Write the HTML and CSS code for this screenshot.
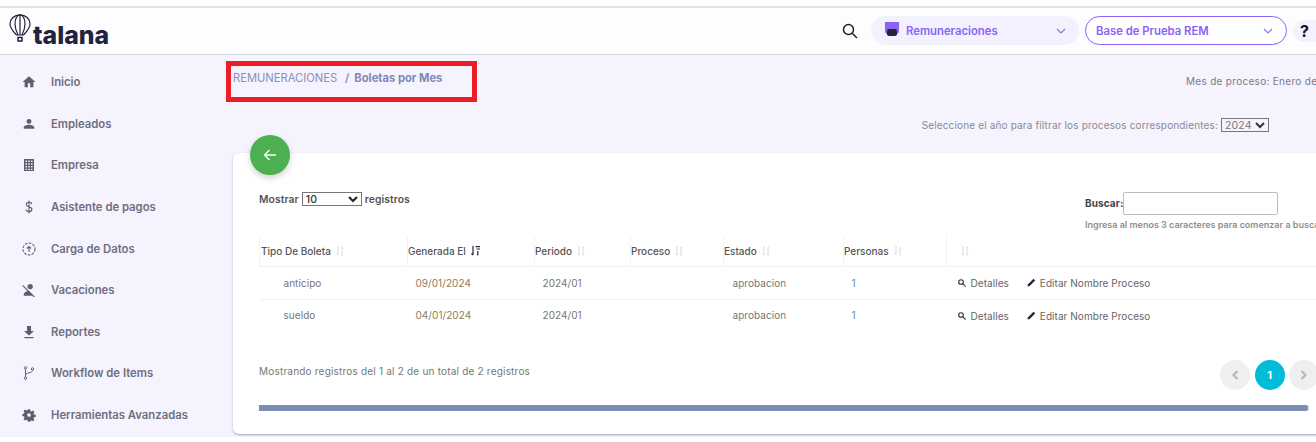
FILE: index.html
```html
<!DOCTYPE html>
<html lang="es">
<head>
<meta charset="utf-8">
<title>Boletas por Mes</title>
<link rel="stylesheet" href="styles.css">
</head>
<body>
<div class="app">
  <header class="topbar">
    <div class="logo">
      <svg class="balloon" width="22" height="28" viewBox="0 0 22 28" fill="none" stroke="#23233f" stroke-width="1.2"><path d="M11 .8C5.2.8 1 5 1 10c0 4.800 4 8 6.500 11h7C17 18 21 14.800 21 10 21 5 16.800.8 11 .8z"/><path d="M11 .8C8 .8 6 5 6 10c0 4.500 1.500 8 3 11M11 .8c3 0 5 4.200 5 9.200 0 4.500-1.500 8-3 11M11 .8V21"/><path d="M9 23.500h4V27H9z" stroke-width="1.500"/></svg>
      <span class="wordmark">talana</span>
    </div>
    <div class="top-actions">
      <svg class="search" width="16" height="16" viewBox="0 0 16 16" fill="none" stroke="#222" stroke-width="1.500"><circle cx="6.500" cy="6.500" r="5"/><path d="M10.200 10.200l4.800 4.800"/></svg>
      <div class="pill pill-fill">
        <svg class="mod-icon" width="14" height="14" viewBox="0 0 14 14"><path d="M0 0h14v9a3 3 0 0 1-3 3H3a3 3 0 0 1-3-3z" fill="#8a63f6"/><rect x="2" y="7" width="10" height="7" rx="2" fill="#23233f"/></svg>
        <span class="pill-text">Remuneraciones</span>
        <svg class="chev" width="10" height="6" viewBox="0 0 10 6" fill="none" stroke="#8a76e8" stroke-width="1.200"><path d="M1 1l4 4 4-4"/></svg>
      </div>
      <div class="pill pill-line">
        <span class="pill-text">Base de Prueba REM</span>
        <svg class="chev" width="10" height="6" viewBox="0 0 10 6" fill="none" stroke="#8a76e8" stroke-width="1.200"><path d="M1 1l4 4 4-4"/></svg>
      </div>
      <div class="help">?</div>
    </div>
  </header>
  <div class="body-row">
    <nav class="sidebar">
      <a class="nav-item"><span class="nav-icon"><svg width="14" height="14" viewBox="0 0 24 24" fill="#5f5e70"><path d="M10 21v-7h4v7h5.500v-9H23L12 2 1 12h3.500v9z"/></svg></span>Inicio</a>
      <a class="nav-item"><span class="nav-icon"><svg width="14" height="14" viewBox="0 0 24 24" fill="#5f5e70"><circle cx="12" cy="7.500" r="4.200"/><path d="M3 20v-2c0-3.200 5.500-4.800 9-4.800s9 1.600 9 4.800v2z"/></svg></span>Empleados</a>
      <a class="nav-item"><span class="nav-icon"><svg width="14" height="14" viewBox="0 0 14 14" fill="#5f5e70"><path fill-rule="evenodd" d="M2 1h10v12H2zM3.500 2.500v1.500H5V2.500zm2.700 0v1.500h1.600V2.500zm2.800 0v1.500h1.500V2.500zM3.500 5.200v1.500H5V5.200zm2.700 0v1.500h1.600V5.200zm2.800 0v1.500h1.500V5.200zM3.500 8v1.500H5V8zm2.700 0v1.500h1.600V8zM9 8v1.500h1.500V8zm-5.500 2.700v1.300H5v-1.300zm2.700 0v1.300h1.600v-1.300zm2.800 0v1.300h1.500v-1.300z"/></svg></span>Empresa</a>
      <a class="nav-item"><span class="nav-icon"><svg width="14" height="14" viewBox="0 0 14 14" fill="none" stroke="#5f5e70" stroke-width="1.100"><path d="M9.700 4.200C9.700 3 8.600 2.300 7 2.300S4.300 3.200 4.300 4.500 5.400 6.300 7 6.800s2.900 1.100 2.900 2.500S8.600 11.600 7 11.600 4.100 10.800 4.100 9.600M7 .5v13"/></svg></span>Asistente de pagos</a>
      <a class="nav-item"><span class="nav-icon"><svg width="14" height="14" viewBox="0 0 14 14" fill="none" stroke="#5f5e70" stroke-width="1.100"><circle cx="7" cy="7" r="6" stroke-dasharray="2.600 1.300"/><path d="M7 10V4.800M5 6.500l2-2 2 2"/></svg></span>Carga de Datos</a>
      <a class="nav-item"><span class="nav-icon"><svg width="14" height="14" viewBox="0 0 24 24" fill="#5f5e70"><circle cx="14" cy="6" r="4.500"/><path d="M3 22v-2c0-4 5-6.500 9-6.500l7 8.500z"/><path d="M1 4l20 20" stroke="#5f5e70" stroke-width="2"/></svg></span>Vacaciones</a>
      <a class="nav-item"><span class="nav-icon"><svg width="14" height="14" viewBox="0 0 14 14" fill="#5f5e70"><path d="M5 1h4v5h3L7 10.500 2 6h3zM2.500 12h9v1.300h-9z"/></svg></span>Reportes</a>
      <a class="nav-item"><span class="nav-icon"><svg width="14" height="14" viewBox="0 0 14 14" fill="none" stroke="#5f5e70" stroke-width="1"><circle cx="3.500" cy="1.800" r="1.200"/><circle cx="3.500" cy="12.200" r="1.200"/><circle cx="10.500" cy="3" r="1.200"/><path d="M3.500 3v8M3.500 9c0-2.500 7-1.500 7-4.800"/></svg></span>Workflow de Items</a>
      <a class="nav-item"><span class="nav-icon"><svg width="14" height="14" viewBox="0 0 24 24" fill="#5f5e70"><path fill-rule="evenodd" d="M10 1h4l.7 3.200 2.100.9 2.800-1.800 2.800 2.800-1.800 2.800.9 2.100 3.200.7v4l-3.200.7-.9 2.100 1.800 2.800-2.800 2.800-2.800-1.800-2.100.9L14 25h-4l-.7-3.200-2.100-.9-2.800 1.800-2.800-2.800 1.800-2.800-.9-2.100L-.7 14v-4l3.200-.7.9-2.100L1.600 4.400 4.400 1.600l2.800 1.800 2.100-.9zM12 8.500a3.500 3.500 0 1 0 0 7 3.500 3.500 0 0 0 0-7z" transform="translate(1.200 1.200) scale(.9)"/></svg></span>Herramientas Avanzadas</a>
    </nav>
    <main class="content">
      <div class="overlay-mark"></div>
      <div class="crumb-row">
        <div class="crumbs"><span class="crumb-root">REMUNERACIONES</span><span class="crumb-sep">/</span><strong>Boletas por Mes</strong></div>
        <div class="process">Mes de proceso: Enero de 2024</div>
      </div>
      <div class="year-row">
        <span>Seleccione el año para filtrar los procesos correspondientes:</span>
        <span class="fake-select year"><span>2024</span><svg width="10" height="7" viewBox="0 0 10 7" fill="none" stroke="#333" stroke-width="2"><path d="M1 1l4 4 4-4"/></svg></span>
      </div>
      <section class="card">
        <button class="back" aria-label="Volver"><svg width="14" height="12" viewBox="0 0 14 12" fill="none" stroke="#fff" stroke-width="1.300"><path d="M13 6H1.500M6.500 1l-5 5 5 5"/></svg></button>
        <div class="tools">
          <div class="length"><span>Mostrar</span><span class="fake-select len"><span>10</span><svg width="10" height="7" viewBox="0 0 10 7" fill="none" stroke="#222" stroke-width="2"><path d="M1 1l4 4 4-4"/></svg></span><span>registros</span></div>
          <div class="finder">
            <div class="finder-line"><span class="finder-label">Buscar:</span><span class="input"></span></div>
            <div class="hint">Ingresa al menos 3 caracteres para comenzar a buscar</div>
          </div>
        </div>
        <table class="grid">
          <thead>
            <tr>
              <th class="c1"><span class="th-t">Tipo De Boleta</span><svg class="sort" width="8" height="10" viewBox="0 0 8 10" fill="none" stroke="#d9d9de"><path d="M2 0v9M.5 7.500L2 9M6 10V1M7.500 2.500L6 1"/></svg></th>
              <th class="c2"><span class="th-t">Generada El</span><svg class="sort" width="9" height="10" viewBox="0 0 9 10" fill="none" stroke="#23233f" stroke-width="1.200"><path d="M2 0v9M.5 7.500L2 9M4.500 .7H9M5.500 3H9M6.800 5v4.500"/></svg></th>
              <th class="c3"><span class="th-t">Periodo</span><svg class="sort" width="8" height="10" viewBox="0 0 8 10" fill="none" stroke="#d9d9de"><path d="M2 0v9M.5 7.500L2 9M6 10V1M7.500 2.500L6 1"/></svg></th>
              <th class="c4"><span class="th-t">Proceso</span><svg class="sort" width="8" height="10" viewBox="0 0 8 10" fill="none" stroke="#d9d9de"><path d="M2 0v9M.5 7.500L2 9M6 10V1M7.500 2.500L6 1"/></svg></th>
              <th class="c5"><span class="th-t">Estado</span><svg class="sort" width="8" height="10" viewBox="0 0 8 10" fill="none" stroke="#d9d9de"><path d="M2 0v9M.5 7.500L2 9M6 10V1M7.500 2.500L6 1"/></svg></th>
              <th class="c6"><span class="th-t">Personas</span><svg class="sort" width="8" height="10" viewBox="0 0 8 10" fill="none" stroke="#d9d9de"><path d="M2 0v9M.5 7.500L2 9M6 10V1M7.500 2.500L6 1"/></svg></th>
              <th class="c7"><svg class="sort" width="8" height="10" viewBox="0 0 8 10" fill="none" stroke="#d9d9de"><path d="M2 0v9M.5 7.500L2 9M6 10V1M7.500 2.500L6 1"/></svg></th>
            </tr>
          </thead>
          <tbody>
            <tr>
              <td class="tipo">anticipo</td><td class="fecha">09/01/2024</td><td class="per">2024/01</td><td></td><td class="est">aprobacion</td><td class="num">1</td>
              <td class="acts"><span class="act"><svg width="8" height="8" viewBox="0 0 8 8" fill="none" stroke="#333" stroke-width="1.100"><circle cx="3" cy="3" r="2.300"/><path d="M4.700 4.700L7.600 7.600"/></svg>Detalles</span><span class="act edit"><svg width="9" height="9" viewBox="0 0 9 9"><path d="M6.500.8l1.700 1.700L2.700 8 .6 8.400 1 6.300z" fill="#2c2340"/></svg>Editar Nombre Proceso</span></td>
            </tr>
            <tr>
              <td class="tipo">sueldo</td><td class="fecha">04/01/2024</td><td class="per">2024/01</td><td></td><td class="est">aprobacion</td><td class="num">1</td>
              <td class="acts"><span class="act"><svg width="8" height="8" viewBox="0 0 8 8" fill="none" stroke="#333" stroke-width="1.100"><circle cx="3" cy="3" r="2.300"/><path d="M4.700 4.700L7.600 7.600"/></svg>Detalles</span><span class="act edit"><svg width="9" height="9" viewBox="0 0 9 9"><path d="M6.500.8l1.700 1.700L2.700 8 .6 8.400 1 6.300z" fill="#2c2340"/></svg>Editar Nombre Proceso</span></td>
            </tr>
          </tbody>
        </table>
        <div class="foot">
          <div class="info">Mostrando registros del 1 al 2 de un total de 2 registros</div>
          <div class="pager">
            <span class="pg"><svg width="8" height="10" viewBox="0 0 8 10" fill="none" stroke="#b9b9b9" stroke-width="2.200"><path d="M6.500 1l-4 4 4 4"/></svg></span>
            <span class="pg on">1</span>
            <span class="pg"><svg width="8" height="10" viewBox="0 0 8 10" fill="none" stroke="#b9b9b9" stroke-width="2.200"><path d="M1.500 1l4 4-4 4"/></svg></span>
          </div>
        </div>
        <div class="scroll"><div class="thumb"></div></div>
      </section>
    </main>
  </div>
</div>
</body>
</html>
```

FILE: styles.css
```css
* { box-sizing: border-box; }
html, body { margin: 0; height: 442px; overflow: hidden; background: #fff; }
body { font-family: Inter, "Liberation Sans", sans-serif; color: #555; font-size: 10px; }
.app { width: 1316px; height: 437px; padding-top: 6px; display: flex; flex-direction: column; overflow: hidden; }
.topbar { height: 49px; flex: none; border-top: 2px solid #e2e1de; border-bottom: 1px solid #d8d7da; background: #fdfcff; display: flex; align-items: center; justify-content: space-between; padding-left: 9px; }
.logo { display: flex; align-items: flex-end; height: 30px; margin-top: 2px; }
.balloon { margin-right: 2px; flex: none; align-self: flex-start; margin-top: -3px; }
.wordmark { font-family: Inter, sans-serif; font-weight: 800; font-size: 24.800px; line-height: 24px; color: #23233f; }
.top-actions { display: flex; align-items: center; height: 30px; margin-top: -1px; }
.search { margin-right: 13px; }
.pill { height: 29px; border-radius: 15px; display: flex; align-items: center; font-size: 11.300px; font-weight: 600; color: #8a63f6; }
.pill-fill { width: 208px; background: #f3f1fd; padding: 0 13px 0 14px; margin-right: 6px; }
.pill-line { width: 202px; border: 1px solid #8a63f6; padding: 0 13px 0 10px; margin-right: 6px; background: #fff; }
.mod-icon { margin-right: 7px; margin-top: -4px; }
.pill-text { flex: 1; white-space: nowrap; }
.help { width: 23px; height: 22px; border-radius: 11px 0 0 11px; background: #f3f1fd; font-size: 16px; font-weight: 700; color: #15151f; display: flex; align-items: center; justify-content: center; }
.body-row { flex: 1; display: flex; min-height: 0; background: #f4f3fe; }
.sidebar { width: 233px; flex: none; padding: 6.200px 0 0 22px; display: flex; flex-direction: column; }
.nav-item { height: 41.650px; flex: none; display: flex; align-items: center; font-size: 11.300px; font-weight: 600; color: #6f6e80; white-space: nowrap; }
.nav-icon { width: 29px; flex: none; display: flex; }
.content { position: relative; width: 1083px; flex: none; min-width: 0; }
.overlay-mark { position: absolute; left: -7px; top: 6px; width: 251px; height: 41px; border: 5px solid #ee1c25; }
.crumb-row { height: 62px; display: flex; justify-content: space-between; padding-top: 16px; }
.crumbs { color: #8790bd; font-size: 11.200px; white-space: nowrap; }
.crumb-sep { margin: 0 5px 0 8px; font-weight: 600; }
.crumbs strong { font-weight: 700; color: #8188b3; }
.process { width: 130px; color: #7d7a85; white-space: nowrap; letter-spacing: .3px; overflow: hidden; padding-top: 4px; }
.year-row { height: 36px; display: flex; align-items: flex-start; justify-content: flex-end; padding-right: 47px; padding-top: 2px; color: #8a8a90; letter-spacing: .15px; gap: 3px; }
.fake-select { display: inline-flex; align-items: center; justify-content: space-between; background: #fff; border: 1px solid #777; font-size: 10.500px; color: #777; }
.year { width: 48px; height: 14px; padding: 0 3px; background: transparent; margin-top: -1px; }
.card { position: relative; height: 281px; width: 1100px; background: #fff; border-radius: 6px; box-shadow: 0 1px 2px rgba(60, 60, 80, .45); padding: 0 0 0 26px; }
.back { position: absolute; left: 17px; top: -18px; width: 40px; height: 40px; border: 0; border-radius: 50%; background: #4caf50; box-shadow: 0 3px 6px rgba(0, 0, 0, .18); display: flex; align-items: center; justify-content: center; padding: 0; }
.tools { height: 83px; display: flex; justify-content: space-between; padding-top: 39px; }
.length { display: flex; align-items: center; height: 14px; font-size: 10.300px; font-weight: 600; color: #555; letter-spacing: .1px; gap: 3px; }
.len { width: 60px; height: 14px; padding: 0 3px; color: #333; font-weight: 500; }
.finder { width: 248px; }
.finder-line { display: flex; align-items: center; font-weight: 700; color: #444; font-size: 10px; letter-spacing: .1px; }
.finder-label { width: 38px; flex: none; white-space: nowrap; padding-bottom: 2px; }
.input { width: 155px; height: 23px; background: #fff; border: 1px solid #bdbdbd; border-radius: 2px; }
.hint { margin-top: 4px; font-size: 9px; font-weight: 600; color: #8e8e8e; white-space: nowrap; }
.grid { width: 1070px; table-layout: fixed; border-collapse: collapse; font-size: 10px; }
.grid th { height: 30px; padding: 0; font-weight: 500; text-align: left; color: #555; border-bottom: 1px solid #efefef; border-left: 1px solid #f3f3f3; white-space: nowrap; }
.grid th:first-child { padding-left: 1px; }
.th-t { margin-right: 5px; }
.sort { vertical-align: -1px; }
.c1 { width: 148px; }
.c2 { width: 127px; }
.c3 { width: 96px; }
.c4 { width: 93px; }
.c5 { width: 120px; }
.c6 { width: 103px; }
.grid .c7 { padding-left: 14px; }
.grid td { height: 33px; padding: 0; border-bottom: 1px solid #efefef; color: #777; letter-spacing: .05px; white-space: nowrap; }
.grid tr:last-child td { border-bottom: 0; height: 31px; }
.grid td.tipo { padding-left: 24px; }
.grid td.fecha { padding-left: 8px; color: #8f7a5c; }
.grid td.per { padding-left: 8px; }
.grid td.est { padding-left: 9px; }
.grid td.num { padding-left: 8px; color: #6b86b0; }
.grid td.acts { padding: 1px 0 0 11px; color: #666; }
.grid tr:last-child td.acts { padding-top: 2px; }
.act { display: inline-flex; align-items: center; gap: 5px; }
.act.edit { margin-left: 18px; gap: 4px; }
.foot { display: flex; justify-content: space-between; padding-top: 31px; height: 75px; }
.info { padding-top: 4px; color: #777; letter-spacing: .2px; }
.pager { display: flex; gap: 4.500px; margin-right: 14px; margin-top: -1px; }
.pg { width: 30px; height: 30px; border-radius: 50%; background: #efefef; display: flex; align-items: center; justify-content: center; }
.on { background: #00bcd9; color: #fff; font-weight: 700; font-size: 11px; }
.scroll { width: 1050px; height: 6px; background: #d2d6e4; }
.thumb { width: 1049px; height: 6px; border-radius: 0 3px 3px 0; background: #7c8db2; }
```
